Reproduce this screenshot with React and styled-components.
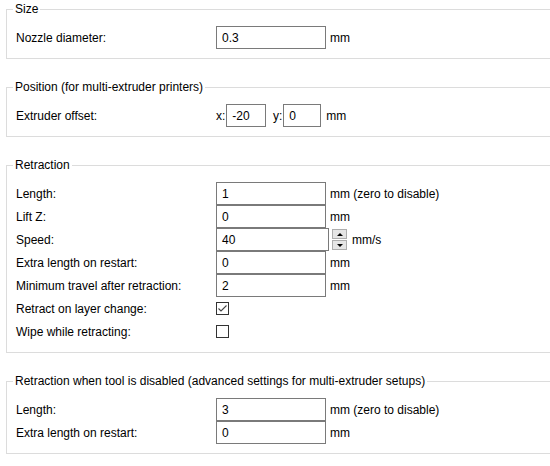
import React from "react";
import styled, {createGlobalStyle} from "styled-components";

const GlobalStyle = createGlobalStyle`
    html, body {
        margin: 0;
        padding: 0;
        background: #ffffff;
        overflow: hidden;
    }

    body {
        font-family: "Liberation Sans", Arial, sans-serif;
        font-size: 12px;
        color: #000000;
    }
`;

const Page = styled.div`
    width: 560px;
    padding: 0 0 0 6px;
    box-sizing: border-box;
`;

const Group = styled.section`
    margin-top: ${({first}) => (first ? "9px" : "28px")};
    padding: 0 0 9px 9px;

    border: 1px solid #dcdcdc;
`;

const Title = styled.div`
    display: table;

    margin: -9px 0 9px -3px;
    padding: 0 2px;

    line-height: 16px;

    background: #ffffff;
`;

const Row = styled.div`
    display: flex;
    align-items: center;

    height: 23px;
`;

const Label = styled.span`
    flex: 0 0 200px;
`;

const Input = styled.div`
    box-sizing: border-box;
    display: flex;
    align-items: center;

    width: ${({width}) => width || 110}px;
    height: 23px;
    padding-left: 5px;

    border: 1px solid #7a7a7a;

    background: #ffffff;
`;

const Unit = styled.span`
    margin-left: ${({gap}) => gap ?? 4}px;
`;

const Axis = styled.span`
    box-sizing: border-box;
    flex: 0 0 ${({width}) => width}px;
    padding-right: 1px;

    text-align: right;
    white-space: nowrap;
`;

const Spin = styled.div`
    display: flex;
    flex-direction: column;
    gap: 1px;

    margin-left: 3px;
`;

const SpinButton = styled.div`
    box-sizing: border-box;
    display: flex;
    align-items: center;
    justify-content: center;

    width: 15px;
    height: 10px;

    border: 1px solid #adadad;

    background: #e5e5e5;
`;

const Arrow = styled.span`
    width: 0;
    height: 0;

    border-left: 3px solid transparent;
    border-right: 3px solid transparent;
    ${({down}) => (down
        ? "border-top: 3px solid #000000;"
        : "border-bottom: 3px solid #000000;")}
`;

const Check = styled.span`
    box-sizing: border-box;
    display: flex;
    align-items: center;
    justify-content: center;

    width: 13px;
    height: 13px;

    border: 1px solid #333333;

    background: #ffffff;
`;

function Field({label, value, unit, width}) {
    return (
        <Row>
            <Label>{label}</Label>
            <Input width={width}>{value}</Input>
            <Unit>{unit}</Unit>
        </Row>
    );
}

function CheckField({label, checked}) {
    return (
        <Row>
            <Label>{label}</Label>
            <Check>
                {checked && (
                    <svg width="11" height="11" viewBox="0 0 11 11">
                        <polyline points="1.5,5.5 4,8 9.5,2.5" fill="none" stroke="#444" strokeWidth="1.1" />
                    </svg>
                )}
            </Check>
        </Row>
    );
}

export default function App() {
    return (
        <Page>
            <GlobalStyle />
            <Group first>
                <Title>Size</Title>
                <Field label="Nozzle diameter:" value="0.3" unit="mm" />
            </Group>

            <Group>
                <Title>Position (for multi-extruder printers)</Title>
                <Row>
                    <Label>Extruder offset:</Label>
                    <Axis width={8}>x:</Axis>
                    <Input width={40}>-20</Input>
                    <Axis width={17}>y:</Axis>
                    <Input width={38}>0</Input>
                    <Unit gap={5}>mm</Unit>
                </Row>
            </Group>

            <Group>
                <Title>Retraction</Title>
                <Field label="Length:" value="1" unit="mm (zero to disable)" />
                <Field label="Lift Z:" value="0" unit="mm" />
                <Row>
                    <Label>Speed:</Label>
                    <Input width={113}>40</Input>
                    <Spin>
                        <SpinButton><Arrow /></SpinButton>
                        <SpinButton><Arrow down /></SpinButton>
                    </Spin>
                    <Unit gap={5}>mm/s</Unit>
                </Row>
                <Field label="Extra length on restart:" value="0" unit="mm" />
                <Field label="Minimum travel after retraction:" value="2" unit="mm" />
                <CheckField label="Retract on layer change:" checked />
                <CheckField label="Wipe while retracting:" />
            </Group>

            <Group>
                <Title>Retraction when tool is disabled (advanced settings for multi-extruder setups)</Title>
                <Field label="Length:" value="3" unit="mm (zero to disable)" />
                <Field label="Extra length on restart:" value="0" unit="mm" />
            </Group>
        </Page>
    );
}
